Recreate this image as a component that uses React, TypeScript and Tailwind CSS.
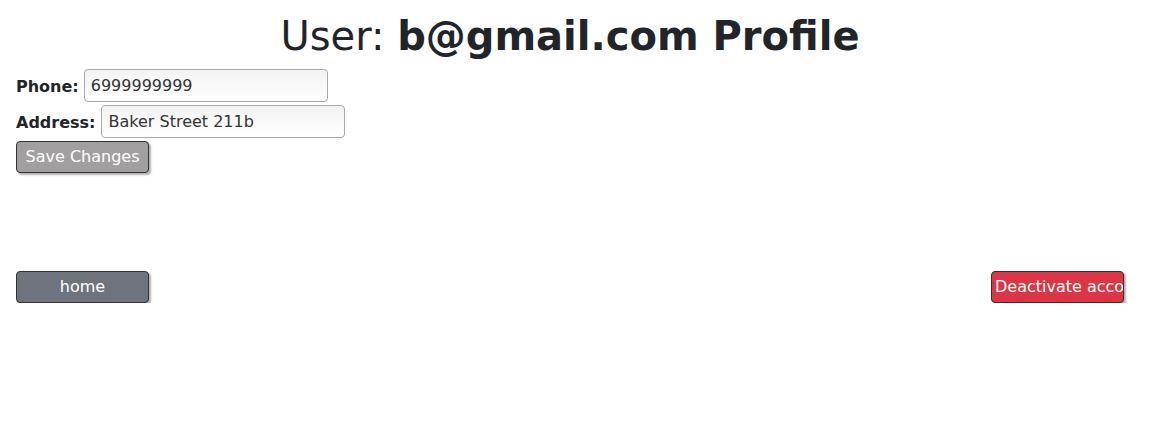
export default function App() {
  return (
    <div className="w-[1140px] px-4 pt-3 text-[#212529] font-['DejaVu_Sans',sans-serif]">
      <h1 className="text-center text-[40px] leading-[48px] mb-[9px]">
        User: <b>b@gmail.com Profile</b>
      </h1>
      <div className="flex flex-col gap-[3px] items-start">
        <div className="flex items-center">
          <label className="font-bold text-[16px] mt-[2px] mr-[5px]">Phone:</label>
          <input
            defaultValue="6999999999"
            className="w-[244px] h-[33px] px-[6px] text-[16px] border border-[#aaa] rounded-[4px] bg-gradient-to-b from-[#f3f3f3] to-white text-[#333] outline-none"
          />
        </div>
        <div className="flex items-center">
          <label className="font-bold text-[16px] mt-[2px] mr-[6px]">Address:</label>
          <input
            defaultValue="Baker Street 211b"
            className="w-[244px] h-[33px] px-[6px] text-[16px] border border-[#aaa] rounded-[4px] bg-gradient-to-b from-[#f3f3f3] to-white text-[#333] outline-none"
          />
        </div>
        <button className="w-[133px] h-[32px] text-[16px] text-white bg-[#a19f9f] border border-[#333] rounded-[4px] shadow-[2px_2px_2px_rgba(0,0,0,0.3)]">
          Save Changes
        </button>
      </div>
      <div className="flex justify-between mt-[98px]">
        <button className="w-[133px] h-[32px] text-[16px] text-white bg-[#6c757d] border border-[#333] rounded-[4px] shadow-[2px_2px_2px_rgba(0,0,0,0.3)]">
          home
        </button>
        <button className="w-[133px] h-[32px] px-[3px] text-[16px] text-white bg-[#dc3545] border border-[#333] rounded-[4px] shadow-[2px_2px_2px_rgba(0,0,0,0.3)] overflow-hidden whitespace-nowrap text-left">
          Deactivate account
        </button>
      </div>
    </div>
  );
}
